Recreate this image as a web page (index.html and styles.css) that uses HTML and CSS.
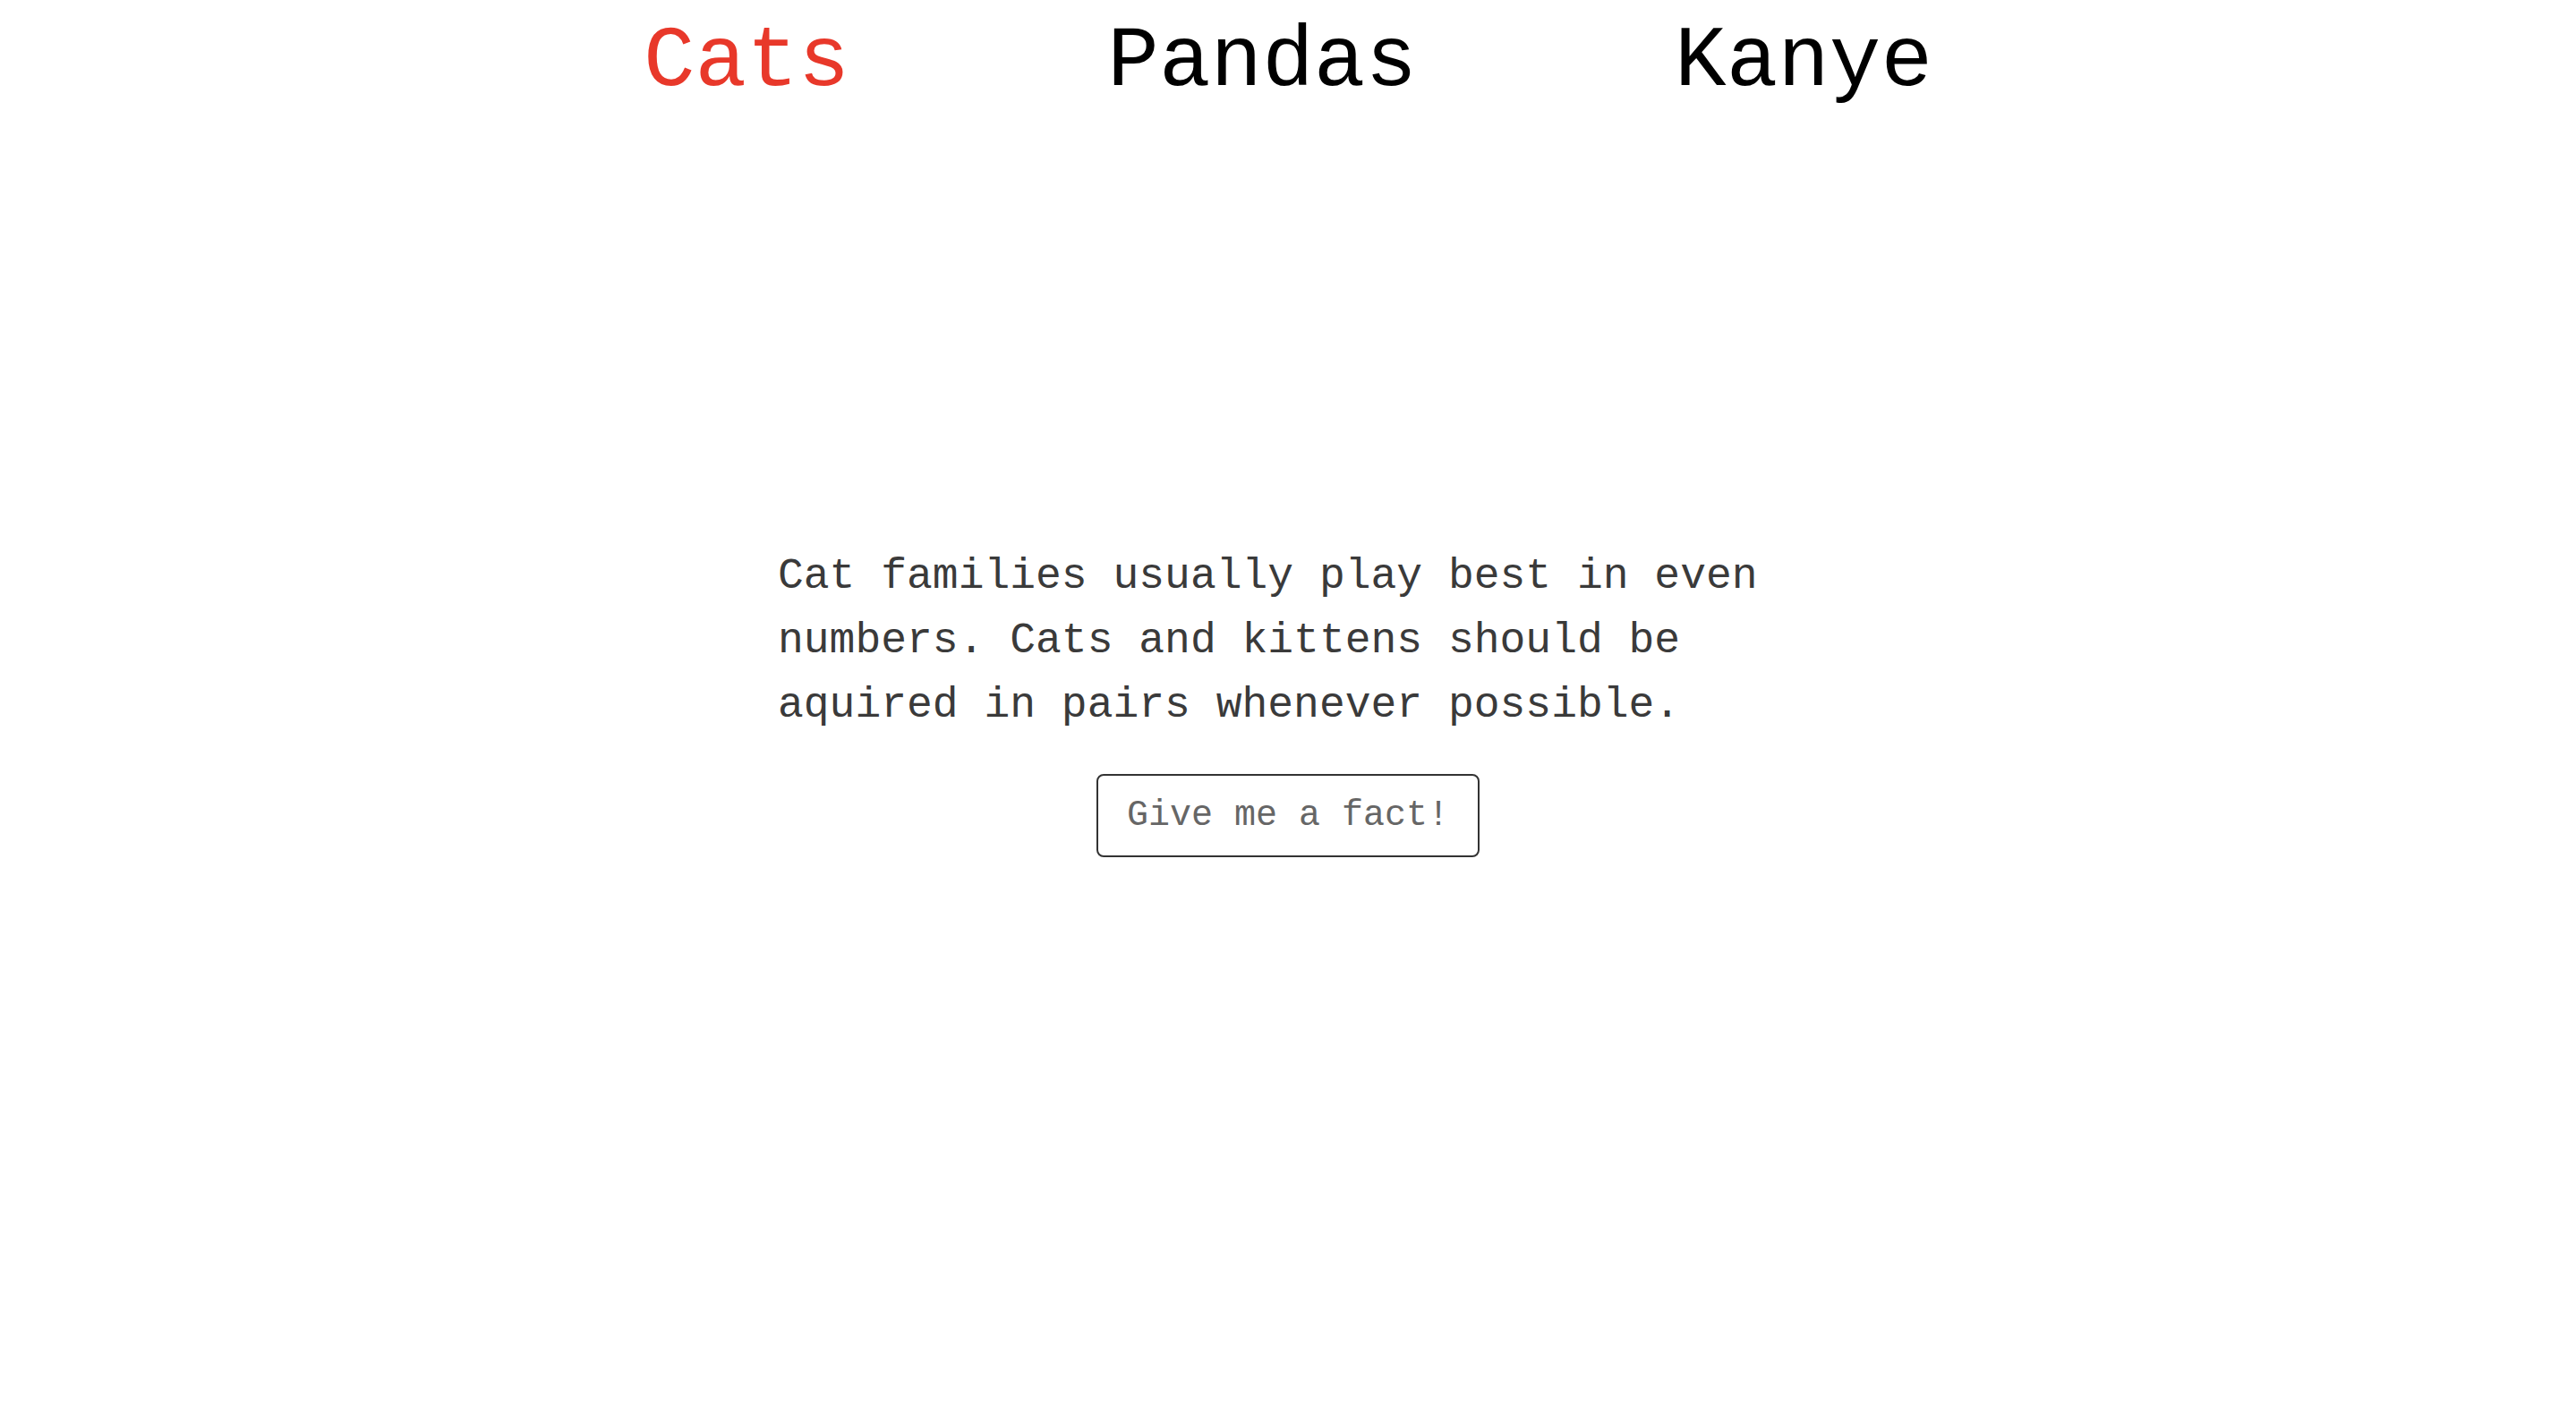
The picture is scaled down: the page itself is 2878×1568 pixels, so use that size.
FILE: index.html
```html
<!DOCTYPE html>
<html lang="en">
<head>
<meta charset="utf-8">
<title>Facts</title>
<link rel="stylesheet" href="styles.css">
</head>
<body>
<div class="page">
  <nav class="nav">
    <a class="nav-link active" href="#">Cats</a>
    <a class="nav-link" href="#">Pandas</a>
    <a class="nav-link" href="#">Kanye</a>
  </nav>
  <main class="main">
    <p class="fact">Cat families usually play best in even numbers. Cats and kittens should be aquired in pairs whenever possible.</p>
    <button class="fact-button" type="button">Give me a fact!</button>
  </main>
  <div class="spacer"></div>
</div>
</body>
</html>
```

FILE: styles.css
```css
html, body {
  margin: 0;
  padding: 0;
  background: #fff;
}

body {
  font-family: "Courier New", "Nimbus Mono PS", "Liberation Mono", monospace;
  color: #000;
}

.page {
  display: grid;
  grid-template-rows: 1fr auto 1fr;
  height: 100vh;
}

.nav {
  align-self: start;
  display: flex;
  justify-content: center;
  gap: 288px;
  padding-top: 15px;
}

.nav-link {
  font-size: 96px;
  line-height: normal;
  color: #000;
  text-decoration: none;
}

.nav-link.active {
  color: #e8382a;
}

.main {
  display: flex;
  flex-direction: column;
  align-items: center;
  margin-top: -2px;
}

.fact {
  width: 1140px;
  margin: 0;
  font-size: 48px;
  line-height: 72px;
  color: #3a3a3a;
  text-align: left;
}

.fact-button {
  margin-top: 41px;
  font-family: "Courier New", "Nimbus Mono PS", "Liberation Mono", monospace;
  font-size: 40px;
  line-height: normal;
  color: #666;
  background: #fff;
  border: 2px solid #333;
  border-radius: 8px;
  padding: 22px 32px;
}
```
